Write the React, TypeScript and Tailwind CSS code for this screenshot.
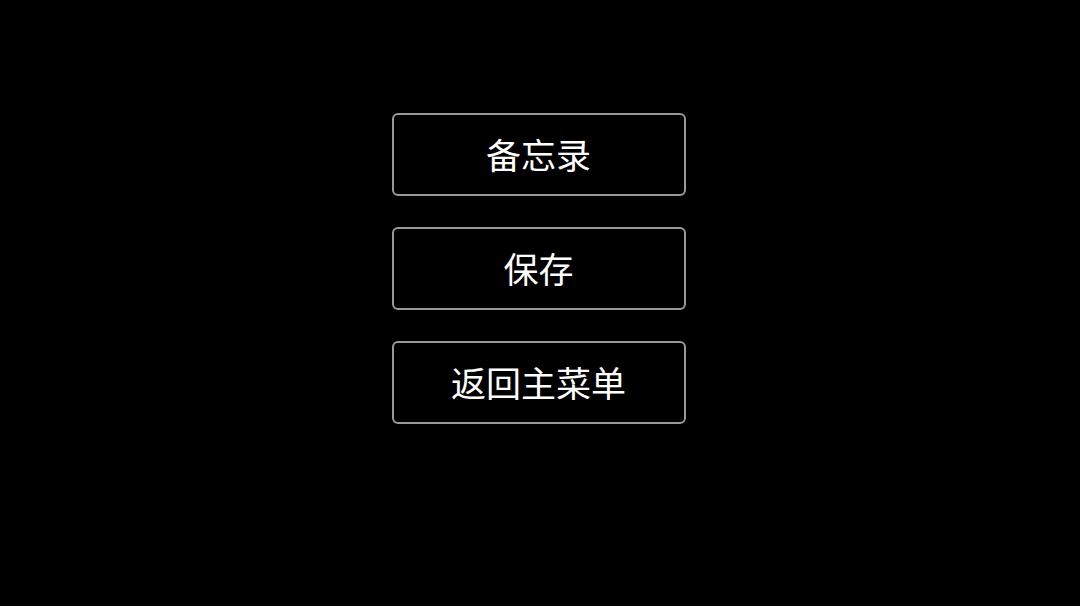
const items = ["备忘录", "保存", "返回主菜单"];

export default function App() {
  return (
    <div className="flex h-[606px] w-[1080px] flex-col items-center gap-[31px] bg-black pt-[113px] pr-[3px] font-['Noto_Sans_CJK_SC',sans-serif]">
      {items.map((label) => (
        <button
          key={label}
          className="flex h-[83px] w-[294px] items-center justify-center rounded-[6px] border-2 border-[#999999] bg-black pb-[2px] text-[35px] leading-none text-white"
        >
          {label}
        </button>
      ))}
    </div>
  );
}
